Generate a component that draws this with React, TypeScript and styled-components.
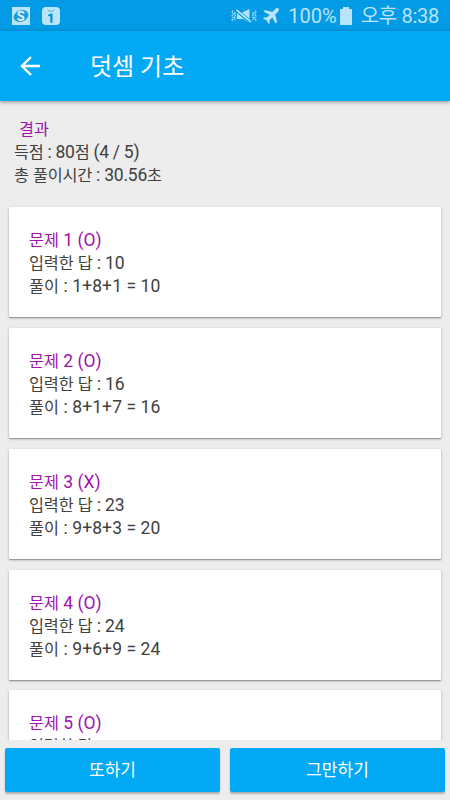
import React from 'react';
import styled, { createGlobalStyle } from 'styled-components';

const Global = createGlobalStyle`
  *, *::before, *::after { box-sizing: border-box; }
  body { margin: 0; background: #ededed; font-family: Roboto, "Noto Sans CJK KR", sans-serif; }
  h1, h2, p { margin: 0; font-weight: 400; }
`;

const Screen = styled.div`
  width: 450px;
  height: 800px;
  display: flex;
  flex-direction: column;
  overflow: hidden;
  background: #ededed;
`;

const StatusBar = styled.div`
  flex: none;
  height: 31px;
  padding: 0 11px 0 12px;
  display: flex;
  align-items: center;
  background: #039be5;
  color: #b9e4f9;
`;

const Notifications = styled.div`
  display: flex;
  gap: 12px;
  margin-right: auto;
  padding-top: 1px;
  svg { display: block; }
`;

const StatusIcon = styled.svg<{ $gap: number }>`
  display: block;
  flex: none;
  margin-right: ${(p) => p.$gap}px;
`;

const StatusText = styled.span<{ $gap?: number; $spacing?: number }>`
  font-size: 20px;
  line-height: 29px;
  white-space: nowrap;
  letter-spacing: ${(p) => p.$spacing ?? 0}px;
  margin-right: ${(p) => p.$gap ?? 0}px;
  padding-top: 2px;
`;

const AppBar = styled.header`
  flex: none;
  height: 70px;
  padding-left: 20px;
  display: flex;
  align-items: center;
  background: #03a9f4;
  color: #fff;
  box-shadow: 0 1px 4px rgba(0, 0, 0, 0.42);
  z-index: 1;
`;

const BackButton = styled.button`
  width: 20px;
  height: 20px;
  margin-right: 50px;
  padding: 0;
  border: 0;
  background: none;
  color: inherit;
  svg { display: block; }
`;

const Title = styled.h1`
  font-size: 24px;
  line-height: 36px;
  padding-top: 2px;
  white-space: pre;
`;

const Results = styled.main`
  flex: none;
  height: 639px;
  overflow: hidden;
  padding: 17px 9px 0;
`;

const Summary = styled.section`
  height: 89px;
  padding-left: 5px;
`;

const Heading = styled.h2<{ $indent?: number }>`
  font-size: 17.5px;
  line-height: 23px;
  height: 23px;
  color: #a013af;
  white-space: pre;
  padding-left: ${(p) => p.$indent ?? 0}px;
`;

const Line = styled.p<{ $spacing?: number }>`
  font-size: 17.5px;
  line-height: 23px;
  height: 23px;
  color: #414141;
  white-space: pre;
  letter-spacing: ${(p) => p.$spacing ?? 0}px;
`;

const Hangul = styled.span`
  font-size: 16.3px;
  line-height: 1;
`;

const CardList = styled.div`
  display: flex;
  flex-direction: column;
  gap: 10.85px;
`;

const Card = styled.article`
  flex: none;
  height: 110px;
  padding: 22px 20px 0;
  border-radius: 1px;
  background: #fff;
  box-shadow: 0 1px 1px rgba(0, 0, 0, 0.25), 0 1px 3px rgba(0, 0, 0, 0.25);
`;

const Actions = styled.footer`
  flex: 1;
  display: flex;
  gap: 10px;
  padding: 8px 5px;
`;

const ActionButton = styled.button`
  flex: 1;
  height: 44px;
  padding: 1px 0 0;
  border: 0;
  border-radius: 2px;
  background: #03a9f4;
  color: #fff;
  font: 400 17px/43px Roboto, "Noto Sans CJK KR", sans-serif;
  box-shadow: 0 2px 2px rgba(0, 0, 0, 0.27);
`;

// Hangul runs are set slightly smaller than the Latin letters and digits.
const Mixed = ({ text }: { text: string }) => (
  <>
    {text.split(/([가-힣]+)/).map((part, i) => (i % 2 ? <Hangul key={i}>{part}</Hangul> : part))}
  </>
);

const questions = [
  { id: 1, mark: 'O', input: '10', solution: '1+8+1 = 10' },
  { id: 2, mark: 'O', input: '16', solution: '8+1+7 = 16' },
  { id: 3, mark: 'X', input: '23', solution: '9+8+3 = 20' },
  { id: 4, mark: 'O', input: '24', solution: '9+6+9 = 24' },
  { id: 5, mark: 'O', input: '', solution: '' },
];

const SyncBadge = () => (
  <svg width="18" height="18" viewBox="0 0 18 18">
    <rect width="18" height="18" fill="#b9e4f9" />
    <ellipse cx="9" cy="9" rx="7.6" ry="5.7" transform="rotate(-24 9 9)" fill="#1c9bdb" />
    <path d="M11.7 6.8C11.5 4 6.5 4 6.5 6.7C6.5 9.5 11.6 8.4 11.6 11.2C11.6 13.8 6.4 13.8 6.2 11.1" fill="none" stroke="#d6f0fc" strokeWidth="2" />
  </svg>
);

const CountBadge = () => (
  <svg width="18" height="18" viewBox="0 0 18 18">
    <rect width="18" height="18" rx="4" fill="#b9e4f9" />
    <path d="M5.5 2.5L7.2 4.2H10.8L12.5 2.5" fill="none" stroke="#4baede" strokeWidth="0.9" />
    <path d="M6 9.3V8L8.8 6.6H10.5V15.8H8.3V8.9Z" fill="#0790d6" />
  </svg>
);

export default function App() {
  return (
    <Screen>
      <Global />
      <StatusBar>
        <Notifications>
          <SyncBadge />
          <CountBadge />
        </Notifications>
        <StatusIcon $gap={6} width="26" height="16" viewBox="0 0 26 16">
          <g fill="none" stroke="currentColor" strokeWidth="1.2">
            <path d="M1.8 2.5L1.1 4L2.3 6L1.1 8L2.3 10L1.1 12L1.8 13.5M4.2 4L3.5 6L4.5 8L3.5 10L4.2 12" strokeDasharray="1.8 .7" />
            <path d="M24.2 2.5L24.9 4L23.7 6L24.9 8L23.7 10L24.9 12L24.2 13.5M21.8 4L22.5 6L21.5 8L22.5 10L21.8 12" strokeDasharray="1.8 .7" />
          </g>
          <path d="M6 4.5H11L18.5 1V15L12 11H6Z" fill="currentColor" />
          <path d="M4.5 3L19 15" stroke="#039be5" strokeWidth="1.5" />
          <path d="M6.5 1.2L21 13.2" stroke="#039be5" strokeWidth="1" />
          <path d="M5.5 1.9L20 14" stroke="currentColor" strokeWidth="1.6" />
        </StatusIcon>
        <StatusIcon $gap={9} width="16" height="16" viewBox="0 0 16 16">
          <path d="M15.5.6C14.6-.4 13 .2 12 1.2L9.4 3.9L2 2L.5 3.5L6.6 6.7L3.8 9.6L1.2 9.3L0 10.5L3.7 12.4L5.6 16L6.8 14.8L6.5 12.2L9.3 9.4L12.6 15.5L14.1 14L12.2 6.6L14.9 3.9C15.8 3 16.3 1.5 15.5.6Z" fill="currentColor" />
        </StatusIcon>
        <StatusText $gap={3}>100%</StatusText>
        <StatusIcon $gap={9} width="12" height="18" viewBox="0 0 12 18">
          <path d="M0 2H3V0H9V2H12V18H0Z" fill="currentColor" />
        </StatusIcon>
        <StatusText $spacing={-0.28}>오후 8:38</StatusText>
      </StatusBar>
      <AppBar>
        <BackButton aria-label="뒤로">
          <svg width="20" height="20" viewBox="0 0 20 20">
            <path d="M20 10H2M11 1L2 10L11 19" fill="none" stroke="currentColor" strokeWidth="2.4" />
          </svg>
        </BackButton>
        <Title>덧셈 기초</Title>
      </AppBar>
      <Results>
        <Summary>
          <Heading $indent={5}><Mixed text="결과" /></Heading>
          <Line $spacing={-0.27}><Mixed text="득점 : 80점 (4 / 5)" /></Line>
          <Line $spacing={-0.22}><Mixed text="총 풀이시간 : 30.56초" /></Line>
        </Summary>
        <CardList>
          {questions.map((q) => (
            <Card key={q.id}>
              <Heading><Mixed text={`문제 ${q.id} (${q.mark})`} /></Heading>
              <Line $spacing={-0.15}><Mixed text={`입력한 답 : ${q.input}`} /></Line>
              {q.solution && <Line $spacing={0.08}><Mixed text={`풀이 : ${q.solution}`} /></Line>}
            </Card>
          ))}
        </CardList>
      </Results>
      <Actions>
        <ActionButton>또하기</ActionButton>
        <ActionButton>그만하기</ActionButton>
      </Actions>
    </Screen>
  );
}
